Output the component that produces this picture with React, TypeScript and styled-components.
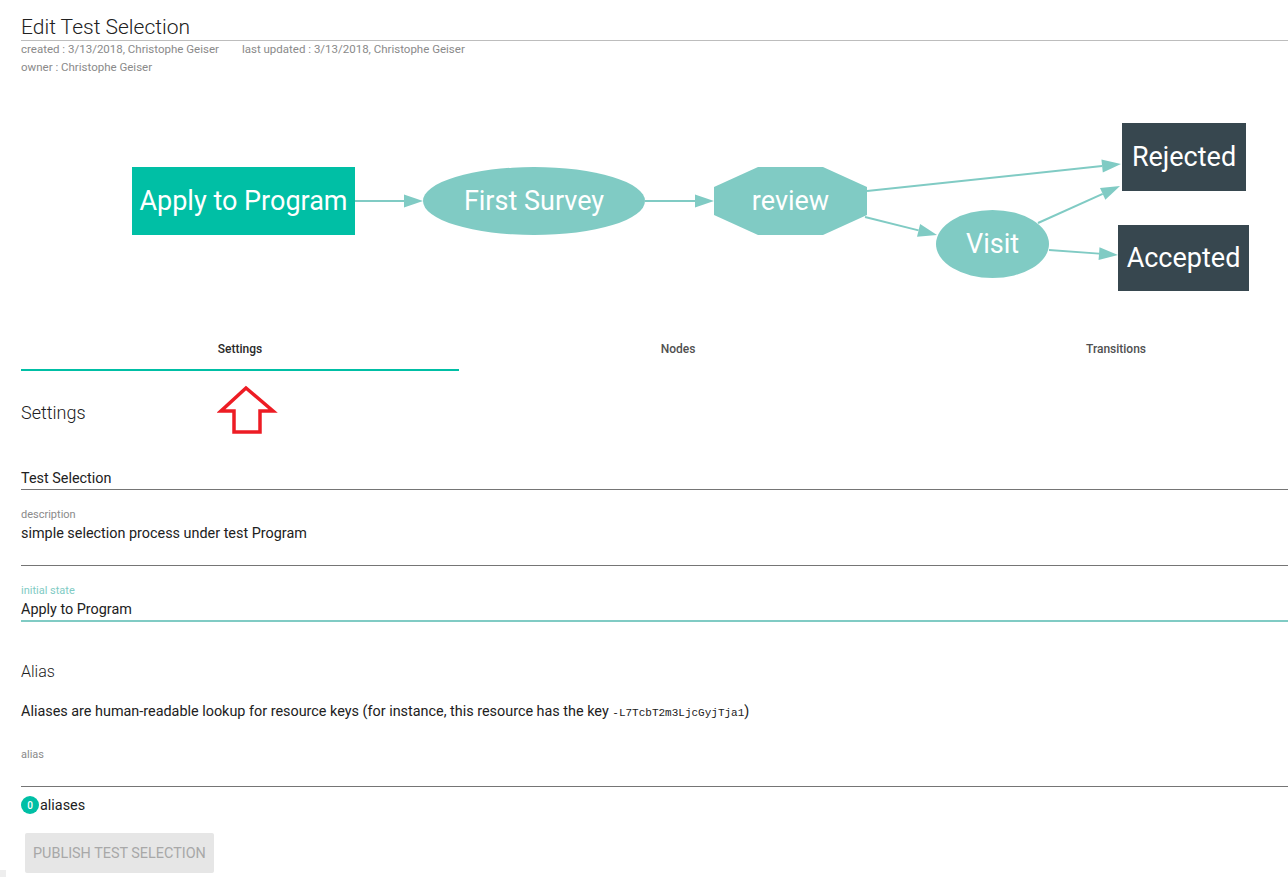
import React, { useState } from 'react';
import styled, { createGlobalStyle } from 'styled-components';

type Shape = 'rect' | 'ellipse' | 'octagon';

interface GraphNode {
  id: string;
  label: string;
  shape: Shape;
  x: number;
  y: number;
  w: number;
  h: number;
  fill: string;
}

// Nodes of the state diagram, placed in page coordinates
const nodes: GraphNode[] = [
  { id: 'apply', label: 'Apply to Program', shape: 'rect', x: 132, y: 167, w: 223, h: 68, fill: '#00bfa5' },
  { id: 'survey', label: 'First Survey', shape: 'ellipse', x: 423, y: 167, w: 222, h: 68, fill: '#80cbc4' },
  { id: 'review', label: 'review', shape: 'octagon', x: 714, y: 167, w: 153, h: 68, fill: '#80cbc4' },
  { id: 'visit', label: 'Visit', shape: 'ellipse', x: 936, y: 210, w: 113, h: 68, fill: '#80cbc4' },
  { id: 'rejected', label: 'Rejected', shape: 'rect', x: 1122, y: 123, w: 124, h: 68, fill: '#37474f' },
  { id: 'accepted', label: 'Accepted', shape: 'rect', x: 1118, y: 225, w: 131, h: 66, fill: '#37474f' },
];

// Edges: start point -> arrow tip
const edges: [number, number, number, number][] = [
  [355, 201, 423, 201],
  [645, 201, 714, 201],
  [867, 191, 1121, 164],
  [865, 217, 937, 235],
  [1038, 223, 1120, 186],
  [1049, 250, 1118, 255],
];

const aliasKey = '-L7TcbT2m3LjcGyjTja1';

const App: React.FC = () => {
  const [tab, setTab] = useState(0);
  const tabs = ['Settings', 'Nodes', 'Transitions'];

  return (
    <>
      <GlobalStyle />
      <Page>
        <Title>Edit Test Selection</Title>
        <Meta>
          <MetaRow>
            <span>created : 3/13/2018, Christophe Geiser</span>
            <span>last updated : 3/13/2018, Christophe Geiser</span>
          </MetaRow>
          <MetaRow>
            <span>owner : Christophe Geiser</span>
          </MetaRow>
        </Meta>

        {/* Diagram of the selection process */}
        <Graph width={1314} height={245} viewBox="21 80 1314 245">
          {edges.map(([x1, y1, x2, y2], i) => {
            const dx = x2 - x1;
            const dy = y2 - y1;
            const len = Math.hypot(dx, dy);
            const ux = dx / len;
            const uy = dy / len;
            const bx = x2 - ux * 19;
            const by = y2 - uy * 19;
            const px = -uy * 6.5;
            const py = ux * 6.5;
            return (
              <g key={i}>
                <line x1={x1} y1={y1} x2={bx} y2={by} stroke="#80cbc4" strokeWidth={2} />
                <polygon
                  points={`${x2},${y2} ${bx + px},${by + py} ${bx - px},${by - py}`}
                  fill="#80cbc4"
                />
              </g>
            );
          })}
          {nodes.map(n => {
            const cx = n.x + n.w / 2;
            const cy = n.y + n.h / 2;
            let shape: React.ReactNode;
            if (n.shape === 'rect') {
              shape = <rect x={n.x} y={n.y} width={n.w} height={n.h} fill={n.fill} />;
            } else if (n.shape === 'ellipse') {
              shape = <ellipse cx={cx} cy={cy} rx={n.w / 2} ry={n.h / 2} fill={n.fill} />;
            } else {
              const l = n.x;
              const r = n.x + n.w;
              const t = n.y;
              const b = n.y + n.h;
              const pts = [
                [l + 44, t], [r - 44, t], [r, t + 20], [r, b - 20],
                [r - 44, b], [l + 44, b], [l, b - 20], [l, t + 20],
              ];
              shape = <polygon points={pts.map(p => p.join(',')).join(' ')} fill={n.fill} />;
            }
            return (
              <g key={n.id}>
                {shape}
                <NodeLabel x={cx} y={cy}>{n.label}</NodeLabel>
              </g>
            );
          })}
        </Graph>

        <TabBar>
          {tabs.map((t, i) => (
            <Tab key={t} $active={i === tab} onClick={() => setTab(i)}>
              {t}
            </Tab>
          ))}
        </TabBar>

        <RedArrow width="62" height="54" viewBox="0 0 62 54">
          <polygon
            points="29,3 4,26 17,26 17,47 43,47 43,26 56,26"
            fill="none"
            stroke="#ed1c24"
            strokeWidth={3.5}
            strokeLinejoin="miter"
          />
        </RedArrow>

        <SectionTitle>Settings</SectionTitle>

        <Field $gap={44}>
          <FieldValue>Test Selection</FieldValue>
        </Field>

        <Field $gap={18}>
          <FieldLabel>description</FieldLabel>
          <FieldValue $minHeight={41}>simple selection process under test Program</FieldValue>
        </Field>

        <Field $gap={18} $focused>
          <FieldLabel $focused>initial state</FieldLabel>
          <FieldValue>Apply to Program</FieldValue>
        </Field>

        <SubTitle>Alias</SubTitle>
        <Paragraph>
          Aliases are human-readable lookup for resource keys (for instance, this resource has the key{' '}
          <Code>{aliasKey}</Code>)
        </Paragraph>

        <Field $gap={25}>
          <FieldLabel>alias</FieldLabel>
          <FieldValue $minHeight={22}></FieldValue>
        </Field>

        <CountRow>
          <Badge>0</Badge>
          <span>aliases</span>
        </CountRow>

        <PublishButton disabled>Publish Test Selection</PublishButton>
      </Page>
      <CornerMark />
    </>
  );
};

export default App;

const GlobalStyle = createGlobalStyle`
  html, body {
    margin: 0;
    padding: 0;
    background: #fff;
    overflow: hidden;
  }
  body {
    font-family: Roboto, "Liberation Sans", Arial, sans-serif;
    color: #212121;
  }
`;

// Page column, wider than the window like the original
const Page = styled.div`
  position: relative;
  width: 1314px;
  margin-left: 21px;
  padding-top: 14px;
  padding-bottom: 4px;
`;

const Title = styled.h1`
  margin: 0;
  font-size: 21px;
  font-weight: 300;
  line-height: 26px;
  color: #212121;
  border-bottom: 1px solid #bdbdbd;
`;

const Meta = styled.div`
  font-size: 11.5px;
  line-height: 18px;
  color: #8a8a8a;
  margin-top: -1px;
`;

const MetaRow = styled.div`
  display: flex;
  gap: 23px;
`;

const Graph = styled.svg`
  display: block;
  margin-top: 4px;
`;

const NodeLabel = styled.text`
  font-family: Roboto, "Liberation Sans", sans-serif;
  font-size: 27px;
  fill: #fff;
  text-anchor: middle;
  dominant-baseline: central;
`;

const TabBar = styled.div`
  display: grid;
  grid-template-columns: repeat(3, 438px);
`;

const Tab = styled.div<{ $active: boolean }>`
  height: 46px;
  box-sizing: border-box;
  padding-top: 4px;
  display: flex;
  align-items: center;
  justify-content: center;
  font-size: 12px;
  font-weight: 500;
  color: ${({ $active }) => ($active ? '#2a2a2a' : '#505050')};
  border-bottom: 2px solid ${({ $active }) => ($active ? '#00bfa5' : 'transparent')};
  cursor: pointer;
`;

const RedArrow = styled.svg`
  position: absolute;
  left: 196px;
  top: 385px;
`;

const SectionTitle = styled.h2`
  margin: 30px 0 0;
  font-size: 18px;
  font-weight: 300;
  line-height: 24px;
  color: #212121;
`;

const Field = styled.div<{ $gap: number; $focused?: boolean }>`
  margin-top: ${({ $gap }) => $gap}px;
  border-bottom: ${({ $focused }) => ($focused ? '2px solid #80cbc4' : '1px solid #757575')};
`;

const FieldLabel = styled.div<{ $focused?: boolean }>`
  font-size: 11px;
  line-height: 14px;
  color: ${({ $focused }) => ($focused ? '#80cbc4' : '#8a8a8a')};
  margin-bottom: 2px;
`;

const FieldValue = styled.div<{ $minHeight?: number }>`
  font-size: 14.4px;
  line-height: 20px;
  color: #212121;
  min-height: ${({ $minHeight }) => $minHeight ?? 20}px;
`;

const SubTitle = styled.h3`
  margin: 39px 0 0;
  font-size: 16px;
  font-weight: 300;
  line-height: 22px;
  color: #212121;
`;

const Paragraph = styled.p`
  margin: 19px 0 0;
  font-size: 14.4px;
  line-height: 20px;
  color: #212121;
`;

const Code = styled.code`
  font-family: "Liberation Mono", "DejaVu Sans Mono", monospace;
  font-size: 11px;
`;

const CountRow = styled.div`
  margin-top: 9px;
  display: flex;
  align-items: center;
  height: 18px;
  font-size: 14.4px;
  color: #212121;
`;

const Badge = styled.span`
  width: 18px;
  height: 18px;
  border-radius: 50%;
  background: #00bfa5;
  color: #fff;
  font-size: 10px;
  font-weight: 500;
  display: inline-flex;
  align-items: center;
  justify-content: center;
  margin-right: 1px;
`;

const PublishButton = styled.button`
  margin: 19px 0 0 4px;
  height: 40px;
  padding: 0 8px;
  border: none;
  border-radius: 2px;
  background: #e6e6e6;
  color: #a8a8a8;
  font-family: Roboto, "Liberation Sans", sans-serif;
  font-size: 14.4px;
  text-transform: uppercase;
  cursor: default;
`;

const CornerMark = styled.div`
  position: fixed;
  left: 0;
  bottom: 0;
  width: 6px;
  height: 7px;
  background: #eeeeee;
`;
